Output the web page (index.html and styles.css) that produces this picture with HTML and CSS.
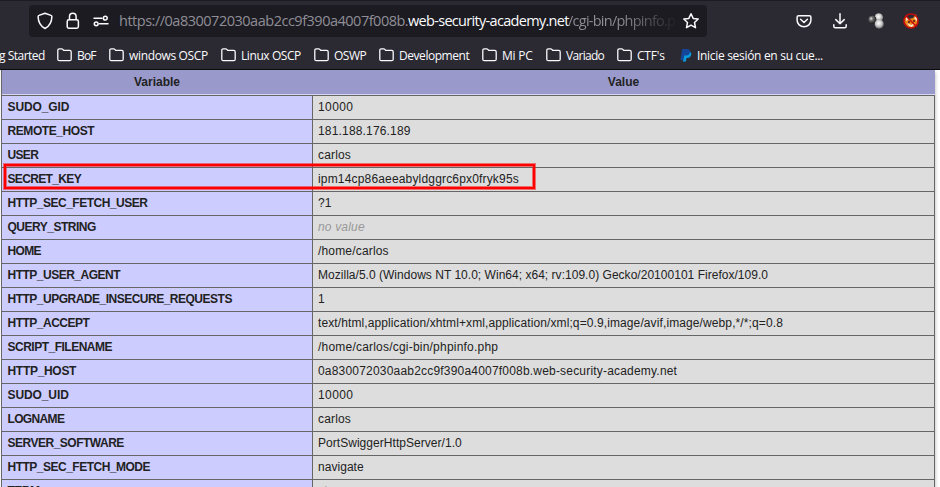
FILE: index.html
```html
<!DOCTYPE html>
<html lang="en">
<head>
<meta charset="utf-8">
<title>phpinfo()</title>
<link rel="stylesheet" href="styles.css">
</head>
<body>
<svg width="0" height="0" class="defs"><symbol id="folder" viewBox="0 0 15 14"><path d="M.8 11.200V2.300Q.8.800 2.300.800h2.400q.7 0 1.100.5l.9 1.100h6q1.500 0 1.500 1.500v7.300q0 1.500-1.500 1.500H2.300Q.8 12.700.8 11.200z" fill="none" stroke="#fbfbfe" stroke-width="1.3"/></symbol></svg>
<header class="browser">
  <div class="toolbar">
    <div class="address">
      <svg class="shield" width="16" height="18" viewBox="0 0 16 18"><path d="M8 1.200L14 3.400q.9.300.9 1.300C14.700 10.500 12.800 14 8 16.500 3.200 14 1.300 10.500 1.100 4.700q0-1 .9-1.300z"/></svg>
      <svg class="lock" width="14" height="18" viewBox="0 0 14 18"><rect x="1.200" y="7.700" width="11.200" height="8.500" rx="1.700"/><path d="M3.500 7.500V4.600a3.300 3.300 0 0 1 6.600 0v2.900"/></svg>
      <svg class="perms" width="16" height="12" viewBox="0 0 16 12"><path d="M1 3.200h8M6.500 8.800H15"/><circle cx="12.300" cy="3.200" r="1.900"/><circle cx="3.200" cy="8.800" r="1.900"/></svg>
      <div class="url"><span class="u1">https://0a830072030aab2cc9f390a4007f008b.</span><span class="u2">web-security-academy.net</span><span class="u3">/cgi-bin/phpinfo.p</span></div>
      <svg class="star" width="18" height="18" viewBox="0 0 18 18"><path d="M9 1.700l2.200 4.700 5 .6-3.700 3.500 1 5.200L9 13.200l-4.500 2.500 1-5.200L1.800 7l5-.6z"/></svg>
    </div>
    <div class="actions">
      <svg width="16" height="16" viewBox="0 0 16 16"><path d="M2.600 2.700h10.800q1.500 0 1.500 1.500v3.100a6.900 6.500 0 0 1-13.800 0V4.200q0-1.500 1.500-1.500z"/><path d="M4.600 6.300L8 9.500l3.400-3.200"/></svg>
      <svg width="16" height="16" viewBox="0 0 16 16"><path d="M8 .8v10M3.800 6.600L8 10.800l4.200-4.200M1.800 11.700v1.500q0 1.500 1.500 1.500h9.400q1.500 0 1.500-1.500v-1.500"/></svg>
      <svg width="18" height="16" viewBox="0 0 18 16"><defs><radialGradient id="dark" cx=".35" cy=".35" r=".7"><stop offset="0" stop-color="#eee"/><stop offset=".3" stop-color="#777"/><stop offset="1" stop-color="#151515"/></radialGradient><radialGradient id="light" cx=".45" cy=".4" r=".7"><stop offset="0" stop-color="#fff"/><stop offset=".45" stop-color="#ccc"/><stop offset="1" stop-color="#444"/></radialGradient></defs><g stroke="none"><circle cx="10.800" cy="4.500" r="4.300" fill="url(#light)"/><circle cx="4.400" cy="6.800" r="4" fill="url(#dark)"/><circle cx="11.200" cy="11.100" r="4.600" fill="url(#light)"/></g></svg>
      <svg width="16" height="16" viewBox="0 0 16 16"><g stroke="none"><path d="M2 4l3 2 5-1 3-4 2 7-2 5-5 2-4-2-3-4z" fill="#e98217"/><path d="M3 3l3 3-3 2zM11 5l3-2v5zM4 10l4 2 4-2-3 4-3-1z" fill="#f7e3cb"/><path d="M5 8h2v2H5zM10 7h2v2h-2z" fill="#713315"/></g><circle class="ban" cx="8" cy="8" r="7.100"/><path class="ban" d="M3 3l10 10"/></svg>
    </div>
  </div>
  <nav class="bookmarks">
    <a><span class="b0">g Started</span></a>
    <a><svg><use href="#folder"/></svg><span class="b1">BoF</span></a>
    <a><svg><use href="#folder"/></svg><span class="b2">windows OSCP</span></a>
    <a><svg><use href="#folder"/></svg><span class="b3">Linux OSCP</span></a>
    <a><svg><use href="#folder"/></svg><span class="b4">OSWP</span></a>
    <a><svg><use href="#folder"/></svg><span class="b5">Development</span></a>
    <a><svg><use href="#folder"/></svg><span class="b6">Mi PC</span></a>
    <a><svg><use href="#folder"/></svg><span class="b7">Variado</span></a>
    <a><svg><use href="#folder"/></svg><span class="b8">CTF's</span></a>
    <a><svg class="paypal" viewBox="0 0 12 14"><path d="M4.500 3.500h5q2.500 1 1.500 4-.8 2.500-4 2.500H6.500l-.6 3.500H2.800z" fill="#0a9bdc"/><path d="M2.200 1h5.200q3 .4 2.500 3.300-.5 3.300-4 3.300H4l-.7 4.400H.5z" fill="#14479a"/></svg><span class="b9">Inicie sesión en su cue...</span></a>
  </nav>
</header>
<main>
<div class="mark"></div>
<table>
<colgroup><col class="name"><col class="value"></colgroup>
<thead><tr><th>Variable</th><th>Value</th></tr></thead>
<tbody>
<tr><td>SUDO_GID</td><td>10000</td></tr>
<tr><td>REMOTE_HOST</td><td>181.188.176.189</td></tr>
<tr><td>USER</td><td>carlos</td></tr>
<tr><td>SECRET_KEY</td><td>ipm14cp86aeeabyldggrc6px0fryk95s</td></tr>
<tr><td>HTTP_SEC_FETCH_USER</td><td>?1</td></tr>
<tr><td>QUERY_STRING</td><td><i>no value</i></td></tr>
<tr><td>HOME</td><td>/home/carlos</td></tr>
<tr><td>HTTP_USER_AGENT</td><td>Mozilla/5.0 (Windows NT 10.0; Win64; x64; rv:109.0) Gecko/20100101 Firefox/109.0</td></tr>
<tr><td>HTTP_UPGRADE_INSECURE_REQUESTS</td><td>1</td></tr>
<tr><td>HTTP_ACCEPT</td><td>text/html,application/xhtml+xml,application/xml;q=0.9,image/avif,image/webp,*/*;q=0.8</td></tr>
<tr><td>SCRIPT_FILENAME</td><td>/home/carlos/cgi-bin/phpinfo.php</td></tr>
<tr><td>HTTP_HOST</td><td>0a830072030aab2cc9f390a4007f008b.web-security-academy.net</td></tr>
<tr><td>SUDO_UID</td><td>10000</td></tr>
<tr><td>LOGNAME</td><td>carlos</td></tr>
<tr><td>SERVER_SOFTWARE</td><td>PortSwiggerHttpServer/1.0</td></tr>
<tr><td>HTTP_SEC_FETCH_MODE</td><td>navigate</td></tr>
<tr><td>TERM</td><td>xterm</td></tr>
</tbody>
</table>
</main>
</body>
</html>
```
FILE: styles.css
```css
* { box-sizing: border-box; }
html, body { height: 487px; overflow: hidden; }
body { margin: 0; background: #fff; color: #222; font: 12px/15px "Liberation Sans", Arial, sans-serif; }
.defs { position: absolute; }
.browser { height: 70px; background: #2b2a33; border-top: 1px solid #1c1b22; border-bottom: 1px solid #0c0c0d; font-family: "Open Sans", "Noto Sans", sans-serif; color: #fbfbfe; }
.toolbar { display: flex; height: 40px; padding: 4px 0 4px 29px; }
.address { display: flex; align-items: center; width: 678px; height: 32px; padding-left: 8px; border-radius: 4px; background: #1c1b22; }
.address svg, .actions svg { flex: none; fill: none; stroke: #fbfbfe; stroke-width: 1.5; stroke-linejoin: round; stroke-linecap: round; }
.actions .ban { stroke: #c50b0b; }
.lock { margin-left: 13px; }
.perms { margin-left: 13px; }
.url { display: flex; flex: none; width: 560px; margin-left: 10px; overflow: hidden; font-size: 14.5px; line-height: 24px; white-space: nowrap; color: #8f8e96; }
.u1 { width: 289px; letter-spacing: -0.49px; }
.u2 { width: 160px; color: #fbfbfe; letter-spacing: -0.69px; }
.u3 { letter-spacing: -0.75px; background: linear-gradient(90deg, #8f8e96 50%, #24232a 100%); -webkit-background-clip: text; background-clip: text; color: transparent; }
.star { margin-left: 3px; }
.actions { display: flex; align-items: center; gap: 20px; margin-left: 89px; }
.actions svg:nth-child(4) { margin-left: -3px; }
.bookmarks { display: grid; grid-template-columns: 57px 52px 112px 93px 65px 103px 64px 71px 63px 150px; height: 29px; align-items: center; font-size: 12px; line-height: 17px; white-space: nowrap; }
.bookmarks a { display: flex; align-items: center; }
.bookmarks svg { width: 15px; height: 14px; margin-right: 5px; flex: none; margin-top: -2px; }
.bookmarks svg.paypal { width: 12px; }
.b0 { margin-left: -1px; letter-spacing: -0.5px; }
.b1 { letter-spacing: -0.8px; }
.b2 { letter-spacing: -0.35px; }
.b3 { letter-spacing: -0.42px; }
.b4 { letter-spacing: -0.5px; }
.b5 { letter-spacing: -0.45px; }
.b6 { letter-spacing: -0.2px; }
.b7 { letter-spacing: -0.7px; }
.b8 { letter-spacing: -0.2px; }
.b9 { letter-spacing: -0.31px; }
main { position: relative; height: 417px; overflow: hidden; padding-left: 1px; }
table { width: 934px; table-layout: fixed; border-collapse: separate; border-spacing: 0; border-left: 1px solid #666; box-shadow: 1px 2px 3px #ccc; }
.name { width: 311px; }
th { height: 24px; padding: 0 1px 1px 0; background: #99c; text-align: center; line-height: 15px; }
thead th { height: 26px; border-bottom: 1px solid #666; box-shadow: inset 0 -1px #d5d5f5; }
td { height: 24px; padding: 0 5px; border-right: 1px solid #666; border-bottom: 1px solid #666; background: #ddd; white-space: nowrap; line-height: 15px; letter-spacing: 0.17px; }
td:first-child { padding-left: 5.5px; background: #ccf; font-weight: bold; letter-spacing: -0.5px; }
tr:nth-child(1) td:first-child, tr:nth-child(13) td:first-child { letter-spacing: -0.1px; }
tr:nth-child(3) td:first-child, tr:nth-child(4) td:first-child, tr:nth-child(7) td:first-child, tr:nth-child(14) td:first-child { letter-spacing: -0.65px; }
tr:nth-child(2) td:first-child { letter-spacing: -0.42px; }
tr:nth-child(12) td:first-child { letter-spacing: -0.3px; }
tr:nth-child(1) td:last-child, tr:nth-child(13) td:last-child { letter-spacing: 0.4px; }
tr:nth-child(8) td:last-child { letter-spacing: 0.025px; }
tr:nth-child(10) td:last-child { letter-spacing: 0.106px; }
tr:nth-child(11) td:last-child { letter-spacing: 0.21px; }
tr:nth-child(12) td:last-child { letter-spacing: 0.195px; }
tr:nth-child(15) td:last-child, tr:nth-child(16) td:last-child { letter-spacing: 0.04px; }
i { color: #999; }
.mark { position: absolute; left: 4px; top: 94px; width: 531px; height: 25px; border: 2px solid #f00; box-shadow: 0 0 0 1px #ff000080, inset 0 0 0 1px #ff000080; }
```
